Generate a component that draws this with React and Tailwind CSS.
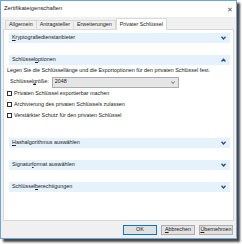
import React from 'react';

const font = { fontFamily: '"Liberation Sans", Arial, sans-serif' };

const Chevron = ({ up }) => (
  <svg width="5" height="4" viewBox="0 0 5 4" className="shrink-0">
    {up ? (
      <path d="M0.5 3.5 L2.5 1.2 L4.5 3.5" fill="none" stroke="#1f4e9c" strokeWidth="1.3" />
    ) : (
      <path d="M0.5 0.8 L2.5 3 L4.5 0.8" fill="none" stroke="#1f4e9c" strokeWidth="1.3" />
    )}
  </svg>
);

const Band = ({ children, up }) => (
  <div className="h-[10px] bg-[#e5f1fb] flex items-center justify-between pl-[3px] pr-[4px] text-[#222]">
    <span>{children}</span>
    <Chevron up={up} />
  </div>
);

const Check = ({ children }) => (
  <div className="h-[11px] flex items-center gap-[2px]">
    <span className="w-[5px] h-[5px] border border-[#333] bg-white shrink-0" />
    <span>{children}</span>
  </div>
);

export default function App() {
  return (
    <div className="w-[242px] h-[244px] bg-white text-[5.4px] leading-none text-[#222]" style={font}>
      <div className="w-[237px] h-[239px] border border-[#6ea6da] bg-[#f0f0f0] flex flex-col shadow-[3px_3px_2px_rgba(40,40,40,0.85)]">
        {/* title bar */}
        <div className="h-[16px] bg-white flex items-center justify-between pl-[3px] pr-[3px] shrink-0">
          <span className="text-[5.8px]">Zertifikateigenschaften</span>
          <span className="text-[7px] text-[#555] leading-none">✕</span>
        </div>

        <div className="flex-1 flex flex-col px-[2px]">
          {/* tabs */}
          <div className="h-[12px] flex items-end pl-[2px] shrink-0">
            <div className="h-[9px] px-[3px] border border-b-0 border-[#d9d9d9] bg-[#f0f0f0] flex items-center">Allgemein</div>
            <div className="h-[9px] px-[3px] border border-b-0 border-l-0 border-[#d9d9d9] bg-[#f0f0f0] flex items-center">Antragsteller</div>
            <div className="h-[9px] px-[3px] border border-b-0 border-l-0 border-[#d9d9d9] bg-[#f0f0f0] flex items-center">Erweiterungen</div>
            <div className="h-[12px] px-[3px] border border-b-0 border-[#d9d9d9] bg-white flex items-center -mb-px relative">Privater Schlüssel</div>
          </div>

          {/* pane */}
          <div className="flex-1 bg-white border border-[#d9d9d9] pt-[3px] pl-[5px] pr-[3px] flex flex-col">
            <Band><span className="underline">K</span>ryptografiedienstanbieter</Band>
            <div className="h-[12px]" />
            <Band up>Schlüssel<span className="underline">o</span>ptionen</Band>
            <div className="flex flex-col -ml-[2px]">
              <div className="h-[11px] flex items-center">Legen Sie die Schlüssellänge und die Exportoptionen für den privaten Schlüssel fest.</div>
              <div className="h-[12px] flex items-center gap-[3px]">
                <span className="pl-[3px] shrink-0">Schlüssel<span className="underline">g</span>röße:</span>
                <div className="w-[127px] h-[11px] bg-[#e5e5e5] border border-[#acacac] flex items-center justify-between pl-[2px] pr-[3px]">
                  <span>2048</span>
                  <svg width="4" height="3" viewBox="0 0 4 3"><path d="M0.3 0.5 L2 2.4 L3.7 0.5" fill="none" stroke="#444" strokeWidth="0.8" /></svg>
                </div>
              </div>
              <Check>Privaten Schlüssel exportierbar machen</Check>
              <Check>Archivierung des privaten Schlüssels zulassen</Check>
              <Check>Verstärkter Schutz für den privaten Schlüssel</Check>
            </div>
            <div className="h-[17px]" />
            <Band><span className="underline">H</span>ashalgorithmus auswählen</Band>
            <div className="h-[12px]" />
            <Band>Signatur<span className="underline">f</span>ormat auswählen</Band>
            <div className="h-[12px]" />
            <Band>Schlüssel<span className="underline">b</span>erechtigungen</Band>
          </div>

          {/* buttons */}
          <div className="h-[17px] flex items-center justify-end gap-[4px] pr-[1px] shrink-0">
            <div className="w-[34px] h-[10px] bg-[#e1e1e1] border border-[#0078d7] flex items-center justify-center">OK</div>
            <div className="w-[34px] h-[10px] bg-[#e1e1e1] border border-[#adadad] flex items-center justify-center"><span><span className="underline">A</span>bbrechen</span></div>
            <div className="w-[34px] h-[10px] bg-[#e1e1e1] border border-[#adadad] flex items-center justify-center"><span><span className="underline">Ü</span>bernehmen</span></div>
          </div>
        </div>
      </div>
    </div>
  );
}
